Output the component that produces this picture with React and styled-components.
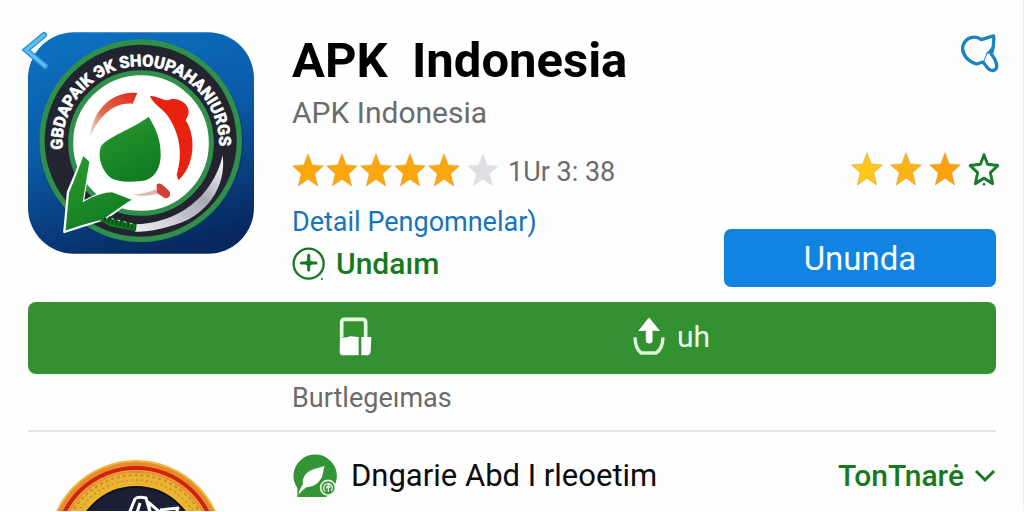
import React from "react";
import styled, { createGlobalStyle } from "styled-components";

const Global = createGlobalStyle`
  * { box-sizing: border-box; }
  body { margin: 0; background: #fefefe; font-family: Roboto, "Liberation Sans", sans-serif; }
  button { border: 0; padding: 0; background: none; font: inherit; color: inherit; cursor: pointer; }
  a { text-decoration: none; }
  h1, p { margin: 0; font-weight: 400; }
  svg { display: block; flex: none; }
`;

const Page = styled.main`
  padding: 32px 27px 0 28px;
  border-right: 1px solid #f0f0f0;
`;

const Header = styled.header`
  display: grid;
  grid-template-columns: 226px 1fr auto;
  column-gap: 38px;
`;

const LogoBox = styled.div`
  position: relative;
  height: 222px;
`;

const BackButton = styled.button`
  position: absolute;
  left: -8px;
  top: -1px;
`;

const Info = styled.div`
  display: flex;
  flex-direction: column;
  align-items: flex-start;
`;

const Title = styled.h1`
  font-size: 49px;
  line-height: 58px;
  font-weight: 700;
  color: #000;
  white-space: pre;
`;

const Muted = styled.p`
  font-size: ${(p) => p.$size}px;
  line-height: 36px;
  color: #6b6b6b;
  white-space: pre;
`;

const Publisher = styled(Muted)`
  margin: 5px 0 21px;
`;

const Rating = styled.div`
  display: flex;
  align-items: center;
  height: 36px;
  gap: ${(p) => p.$gap}px;
`;

const SideRating = styled(Rating)`
  margin-right: -4px;
`;

const Score = styled(Muted)`
  margin: 4px 0 0 7px;
`;

const SilverStar = styled.span`
  margin-left: 5px;
`;

const DetailLink = styled.a`
  margin-top: 16px;
  font-size: 27px;
  line-height: 36px;
  color: #1673bd;
`;

const AddButton = styled.button`
  display: flex;
  align-items: center;
  gap: 10px;
  margin-top: 6px;
  font-size: 30px;
  line-height: 36px;
  font-weight: 500;
  color: #16791f;
`;

const Actions = styled.div`
  display: flex;
  flex-direction: column;
  align-items: flex-end;
`;

const SearchButton = styled.button`
  margin: 1px -3px 78px 0;
`;

const OpenButton = styled.button`
  width: 272px;
  height: 58px;
  margin-top: 42px;
  border-radius: 7px;
  background: #1183e2;
  color: #f4fbff;
  font-size: 33px;
`;

const Bar = styled.div`
  display: grid;
  grid-template-columns: 1fr 1fr;
  height: 72px;
  margin-top: 15px;
  border-radius: 8px;
  background: #339131;
  color: #eaffea;
`;

const BarButton = styled.button`
  display: flex;
  align-items: center;
  justify-content: ${(p) => (p.$end ? "flex-end" : "flex-start")};
  gap: 12px;
  padding: ${(p) => (p.$end ? "0 140px 4px 0" : "0 0 4px 121px")};
  font-size: 30px;
`;

const Caption = styled(Muted)`
  padding: 6px 0 14px 264px;
`;

const AppRow = styled.section`
  display: grid;
  grid-template-columns: 226px 1fr auto;
  column-gap: 38px;
  border-top: 2px solid #e4e4e4;
`;

const Thumb = styled.div`
  height: 51px;
  margin: 28px 0 0 20px;
  overflow: hidden;
`;

const RowName = styled.div`
  display: flex;
  align-items: center;
  gap: 14px;
  height: 79px;
  padding-top: 8px;
  font-size: 31px;
  color: #0b0b0b;
  white-space: pre;
`;

const MoreButton = styled.button`
  display: flex;
  align-items: center;
  gap: 10px;
  height: 79px;
  padding-top: 8px;
  font-size: 30px;
  font-weight: 500;
  color: #16791f;
`;

const STAR = "M50 2 L63 35 L98 38 L71 61 L80 97 L50 77 L20 97 L29 61 L2 38 L37 35 Z";

function Star({ fill, edge = "#dfa43c" }) {
  return (
    <svg width="32" height="34" viewBox="0 0 100 100" preserveAspectRatio="none" aria-hidden="true">
      <path d={STAR} fill={fill} stroke={edge} strokeWidth="2" strokeLinejoin="round" />
    </svg>
  );
}

function OutlineStar() {
  return (
    <svg width="32" height="34" viewBox="0 0 100 100" preserveAspectRatio="none" aria-hidden="true">
      <path d="M50 8 L61 36 L93 40 L70 61 L77 93 L50 77 L23 93 L30 61 L7 40 L39 36 Z" fill="#fff" stroke="#1a7d2b" strokeWidth="9" strokeLinejoin="round" />
      <circle cx="50" cy="95" r="4" fill="#1a7d2b" />
    </svg>
  );
}

function Logo() {
  return (
    <svg width="226" height="222" viewBox="54 36 678 664" role="img" aria-label="APK Indonesia">
      <defs>
        <linearGradient id="tile" x1="0.3" y1="0" x2="0.6" y2="1">
          <stop offset="0" stopColor="#0d6fc0" />
          <stop offset="0.45" stopColor="#0a5aa6" />
          <stop offset="1" stopColor="#06285f" />
        </linearGradient>
        <linearGradient id="leaf" x1="0" y1="0" x2="0.5" y2="1">
          <stop offset="0" stopColor="#2b9a30" />
          <stop offset="1" stopColor="#117c22" />
        </linearGradient>
        <linearGradient id="arc" x1="1" y1="0" x2="0" y2="1">
          <stop offset="0" stopColor="#e02a18" />
          <stop offset="0.6" stopColor="#e2694f" />
          <stop offset="1" stopColor="#cfc3c0" stopOpacity="0.4" />
        </linearGradient>
        <linearGradient id="silver" x1="1" y1="0" x2="0" y2="1">
          <stop offset="0" stopColor="#fff" />
          <stop offset="0.4" stopColor="#a9a9b3" />
          <stop offset="1" stopColor="#f0f0f3" />
        </linearGradient>
        <path id="ring" d="M158 388 A235 235 0 1 1 627 388" />
      </defs>
      <rect x="54" y="36" width="678" height="664" rx="138" fill="url(#tile)" />
      <circle cx="394" cy="366" r="306" fill="#073463" opacity="0.5" />
      <circle cx="392" cy="361" r="296" fill="#22252f" stroke="#2f8f4b" strokeWidth="16" />
      <circle cx="393" cy="368" r="211" fill="#fff" stroke="#2f8f4b" strokeWidth="15" />
      <text fontFamily="Roboto, 'Liberation Sans', sans-serif" fontWeight="700" fontSize="49" fill="#fff" stroke="#fff" strokeWidth="2">
        <textPath href="#ring">GBDAPAIK ЭK SHOUPAHANIURGS</textPath>
      </text>
      <path d="M638 405 C650 500 590 592 480 618 C440 630 405 636 375 634 L370 612 C500 612 610 530 638 405Z" fill="url(#silver)" />
      <path d="M240 352 C245 270 310 208 382 218 L368 250 C315 245 270 280 240 352Z" fill="url(#arc)" />
      <path d="M420 227 C440 226 458 240 475 240 C492 230 525 240 534 264 C540 280 531 292 527 300 C560 350 554 438 505 480 L500 463 C520 400 508 338 474 288 C458 264 431 254 420 227Z" fill="#e8220f" />
      <path d="M440 503 L440 492 C448 486 458 490 480 516 C482 530 472 537 463 532 L441 518Z" fill="#cf4037" />
      <path d="M370 523 Q410 520 440 506 L442 520 Q410 530 370 523Z" fill="#d9b3b0" />
      <path d="M416 289 C438 325 454 360 452 410 C449 450 430 478 395 482 C360 485 325 486 304 474 C276 455 262 410 272 381 C284 352 370 325 416 289Z" fill="url(#leaf)" />
      <path d="M220 406 L238 424 L218 546 C250 526 285 516 306 516 L365 538 C335 555 305 590 270 600 L163 635 L174 515Z" fill="url(#leaf)" stroke="#fff" strokeWidth="7" strokeLinejoin="round" />
      <path d="M220 407 L238 424 L218 546 C250 526 285 516 306 516 L365 538 C335 555 305 580 282 594 L380 612 L378 632 L300 618 L270 600 L175 624 L180 515Z" fill="url(#leaf)" />
      <path d="M282 594 L378 620" stroke="#0c4e22" strokeWidth="20" strokeDasharray="7 5" />
      <path d="M286 590 L380 614" stroke="#d5ecd5" strokeWidth="3" strokeDasharray="8 11" />
    </svg>
  );
}

function BackIcon() {
  return (
    <svg width="30" height="40" viewBox="0 0 30 40" fill="none" strokeLinecap="round" strokeLinejoin="miter">
      <path d="M24 4 L6 19 L25 35" stroke="#2796d8" strokeWidth="6" />
      <path d="M24 4 L6 19 L25 35" stroke="#62bdf0" strokeWidth="3" />
    </svg>
  );
}

function SearchIcon() {
  return (
    <svg width="38" height="40" viewBox="782 40 114 120" fill="none" stroke="#1c84bd" strokeWidth="10" strokeLinejoin="round">
      <path d="M880 49 C864 52 852 58 843 60 C825 46 796 52 788 78 C782 105 805 126 829 133 L848 127 L862 145 C872 158 890 153 889 138 C888 122 880 112 873 103 Q882 80 880 49 Z" />
      <path d="M882 50 L878 101 L856 103 L874 83Z" fill="#1c84bd" stroke="none" />
      <path d="M850 126 L860 102" strokeWidth="3" />
    </svg>
  );
}

function PlusIcon() {
  return (
    <svg width="34" height="36" viewBox="38 150 102 108" fill="none" stroke="#16791f">
      <circle cx="88" cy="203" r="45" strokeWidth="7" />
      <path d="M88 178 V222 M66 201 H110" strokeWidth="9" strokeLinecap="round" />
      <path d="M88 184 L94 195 L106 201 L94 207 L88 218 L82 207 L70 201 L82 195Z" fill="#16791f" stroke="none" />
      <circle cx="128" cy="249" r="3" fill="#16791f" stroke="none" />
    </svg>
  );
}

function LockIcon() {
  return (
    <svg width="34" height="40" viewBox="112 45 102 120">
      <path d="M123 108 V64 Q123 55 132 55 H186 Q195 55 195 64 V108" fill="none" stroke="#e4fbdf" strokeWidth="11" />
      <path d="M118 108 Q134 112 148 106 L174 108 V163 H128 Q117 163 117 152Z" fill="#fff" />
      <path d="M182 108 H212 L210 152 Q208 163 197 163 H182Z" fill="#fff" />
    </svg>
  );
}

function UploadIcon() {
  return (
    <svg width="32" height="38" viewBox="1001 49 96 114">
      <path d="M1049 52 L1080 90 L1058 88 V124 Q1049 131 1041 124 V88 L1019 90Z" fill="#fff" stroke="#fff" strokeWidth="3" strokeLinejoin="round" />
      <path d="M1007 110 Q1008 145 1026 157 H1070 Q1090 145 1091 110" fill="none" stroke="#ddf7d8" strokeWidth="10" />
    </svg>
  );
}

function BadgeIcon() {
  return (
    <svg width="176" height="176" viewBox="0 0 176 176" role="img" aria-label="Emblem">
      <circle cx="88" cy="88" r="87" fill="#e88a2c" stroke="#f1b43c" strokeWidth="2" />
      <circle cx="88" cy="88" r="80" fill="#e8b431" stroke="#cf230d" strokeWidth="4" />
      <circle cx="88" cy="88" r="76" fill="none" stroke="#ee873b" strokeWidth="2" />
      <circle cx="88" cy="88" r="73" fill="none" stroke="#c58e25" strokeWidth="2" strokeDasharray="3 3" />
      <circle cx="88" cy="88" r="68" fill="none" stroke="#cd9827" strokeWidth="2" strokeDasharray="2 3" />
      <circle cx="88" cy="88" r="61" fill="#1c2036" stroke="#111" strokeWidth="2" />
      <path d="M80 56 L87 39 Q90 36 98 38 L103 56 M88 56 L92 43 M103 56 L100 42 L114 54 M112 50 L130 48 L127 56" fill="none" stroke="#fff" strokeWidth="3" strokeLinejoin="round" />
    </svg>
  );
}

function FeatherIcon() {
  return (
    <svg width="45" height="44" viewBox="813 102 135 132">
      <path d="M829 231 V204 A65 64 0 1 1 936 204 L916 231Z" fill="#339536" />
      <path d="M832 224 C835 210 841 200 846 192 C842 170 858 154 880 147 L911 138 C905 152 908 165 899 178 C890 194 872 201 856 202 C847 208 839 217 832 224Z" fill="#fff" />
      <circle cx="921" cy="203" r="22" fill="#339536" stroke="#e8f6e5" strokeWidth="5" />
      <path d="M913 214 A13 13 0 1 1 930 213 M922 194 V216 M915 205 L922 195 L928 203" fill="none" stroke="#e8f6e5" strokeWidth="4" />
    </svg>
  );
}

function ChevronIcon() {
  return (
    <svg width="22" height="16" viewBox="0 0 22 16" fill="none">
      <path d="M2 3 L11 12 L20 3" stroke="#16791f" strokeWidth="3" />
    </svg>
  );
}

export default function App() {
  return (
    <Page>
      <Global />
      <Header>
        <LogoBox>
          <Logo />
          <BackButton aria-label="Back"><BackIcon /></BackButton>
        </LogoBox>
        <Info>
          <Title>{"APK  Indonesia"}</Title>
          <Publisher $size={30}>APK Indonesia</Publisher>
          <Rating $gap={2}>
            {[1, 2, 3, 4, 5].map((n) => <Star key={n} fill="#fba70c" />)}
            <SilverStar><Star fill="#dedfe2" edge="#e8e8ea" /></SilverStar>
            <Score $size={27}>1Ur 3: 38</Score>
          </Rating>
          <DetailLink href="#detail">Detail Pengomnelar)</DetailLink>
          <AddButton><PlusIcon />Undaım</AddButton>
        </Info>
        <Actions>
          <SearchButton aria-label="Search"><SearchIcon /></SearchButton>
          <SideRating $gap={7}>
            <Star fill="#fdc81c" />
            <Star fill="#fcb416" />
            <Star fill="#f9a20d" />
            <OutlineStar />
          </SideRating>
          <OpenButton>Ununda</OpenButton>
        </Actions>
      </Header>
      <Bar>
        <BarButton $end aria-label="Lock"><LockIcon /></BarButton>
        <BarButton><UploadIcon />uh</BarButton>
      </Bar>
      <Caption $size={27}>Burtlegeımas</Caption>
      <AppRow>
        <Thumb><BadgeIcon /></Thumb>
        <RowName><FeatherIcon />Dngarie Abd I rleoetim</RowName>
        <MoreButton>TonTnarė<ChevronIcon /></MoreButton>
      </AppRow>
    </Page>
  );
}
